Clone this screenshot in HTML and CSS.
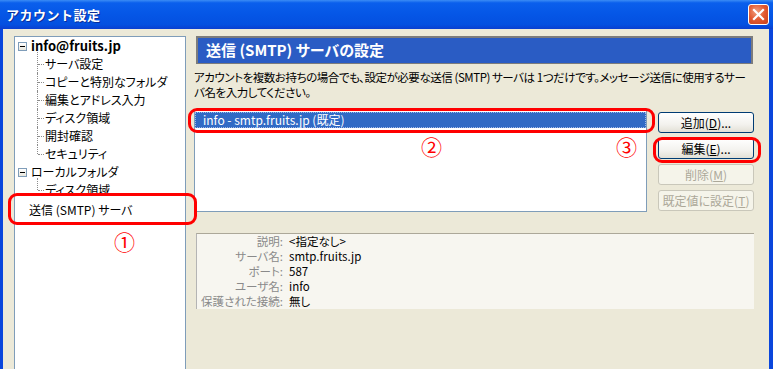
FILE: index.html
```html
<!DOCTYPE html>
<html lang="ja">
<head>
    <meta charset="UTF-8">
    <title>アカウント設定</title>
    <link rel="stylesheet" href="styles.css">
</head>
<body>
    <div class="window">
        <div class="titlebar">
            <span class="title">アカウント設定</span>
            <span class="close">
                <svg width="21" height="21" viewBox="0 0 21 21">
                    <path d="M6 6 L15 15 M15 6 L6 15" stroke="#fff" stroke-width="2.2" stroke-linecap="square"/>
                </svg>
            </span>
        </div>
        <div class="frame">
            <div class="tree">
                <div class="node root">
                    <span class="expander"></span>
                    <b>info@fruits.jp</b>
                </div>
                <div class="group">
                    <div class="child">サーバ設定</div>
                    <div class="child">コピーと特別なフォルダ</div>
                    <div class="child">編集とアドレス入力</div>
                    <div class="child">ディスク領域</div>
                    <div class="child">開封確認</div>
                    <div class="child">セキュリティ</div>
                </div>
                <div class="node root">
                    <span class="expander"></span>
                    ローカルフォルダ
                </div>
                <div class="group">
                    <div class="child">ディスク領域</div>
                </div>
                <div class="node leaf">送信 (SMTP) サーバ</div>
            </div>

            <div class="pane">
                <div class="pane-head">送信 (SMTP) サーバの設定</div>
                <p class="pane-desc">
                    アカウントを複数お持ちの場合でも、設定が必要な送信 (SMTP) サーバは 1つだけです。メッセージ送信に使用するサー<br>バ名を入力してください。
                </p>
                <div class="servers">
                    <div class="server-list">
                        <div class="server-item selected">info - smtp.fruits.jp (既定)</div>
                    </div>
                    <div class="server-buttons">
                        <button class="btn">追加(<u>D</u>)...</button>
                        <button class="btn">編集(<u>E</u>)...</button>
                        <button class="btn" disabled>削除(<u>M</u>)</button>
                        <button class="btn" disabled>既定値に設定(<u>T</u>)</button>
                    </div>
                </div>
                <div class="details">
                    <div class="detail-row"><span class="detail-label">説明:</span><span>&lt;指定なし&gt;</span></div>
                    <div class="detail-row"><span class="detail-label">サーバ名:</span><span>smtp.fruits.jp</span></div>
                    <div class="detail-row"><span class="detail-label">ポート:</span><span>587</span></div>
                    <div class="detail-row"><span class="detail-label">ユーザ名:</span><span>info</span></div>
                    <div class="detail-row"><span class="detail-label">保護された接続:</span><span>無し</span></div>
                </div>
            </div>
        </div>

        <div class="mark mark-tree"></div>
        <div class="mark mark-list"></div>
        <div class="mark mark-edit"></div>
        <span class="num num-1">①</span>
        <span class="num num-2">②</span>
        <span class="num num-3">③</span>
    </div>
</body>
</html>
```

FILE: styles.css
```css
body {
    margin: 0;
    padding: 0;
    font-family: "Noto Sans CJK JP", "Noto Sans", sans-serif;
    font-size: 12px;
    color: #000;
    background: #ece9d8;
}
.window {
    position: relative;
    width: 773px;
    height: 369px;
    display: flex;
    flex-direction: column;
    overflow: hidden;
}
.titlebar {
    height: 29px;
    flex: none;
    display: flex;
    align-items: center;
    justify-content: space-between;
    padding: 0 4px 0 6px;
    background: linear-gradient(to bottom, #3b8cf5 0%, #0a5fec 10%, #0556e6 50%, #0450e0 85%, #0a3fd0 100%);
}
.title {
    color: #fff;
    font-weight: bold;
    font-size: 13px;
    letter-spacing: 0.5px;
    text-shadow: 1px 1px 0 #0a2e9a;
}
.close {
    width: 21px;
    height: 21px;
    margin-top: -1px;
    box-sizing: border-box;
    border: 1px solid #fff;
    border-radius: 3px;
    background: radial-gradient(circle at 40% 35%, #f0a080 0%, #e2582f 50%, #c7401c 100%);
    display: flex;
}
.close svg {
    margin: -1px;
}
.frame {
    flex: 1;
    display: flex;
    border-left: 3px solid #0a46dc;
    border-right: 4px solid #0a46dc;
    padding: 7px 15px 0 11px;
    background: #ece9d8;
    font-feature-settings: "palt";
}
.tree {
    width: 170px;
    flex: none;
    background: #fff;
    border: 1px solid #7f9db9;
    border-bottom: none;
}
.node {
    height: 18px;
    line-height: 18px;
    display: flex;
    align-items: center;
}
.root {
    padding-left: 3px;
}
.root b {
    font-size: 13px;
}
.expander {
    width: 7px;
    height: 7px;
    border: 1px solid #7f9db9;
    margin-right: 4px;
    position: relative;
    background: linear-gradient(#fff, #e8e6dc);
}
.expander::after {
    content: '';
    position: absolute;
    left: 1px;
    top: 3px;
    width: 5px;
    height: 1px;
    background: #000;
}
.child {
    position: relative;
    height: 18px;
    line-height: 18px;
    padding-left: 30px;
}
.child::before {
    content: '';
    position: absolute;
    left: 22px;
    top: 0;
    height: 100%;
    border-left: 1px dotted #8c8c8c;
}
.child:first-child::before {
    top: -3px;
    height: calc(100% + 3px);
}
.child:last-child::before {
    height: 9px;
}
.child:first-child:last-child::before {
    height: 12px;
}
.child::after {
    content: '';
    position: absolute;
    left: 23px;
    top: 9px;
    width: 6px;
    border-top: 1px dotted #8c8c8c;
}
.leaf {
    margin-top: 2px;
    padding-left: 14px;
}
.pane {
    flex: 1;
    margin-left: 8px;
    display: flex;
    flex-direction: column;
}
.pane-head {
    height: 28px;
    margin: 0 1px 0 2px;
    box-sizing: border-box;
    border: 2px solid #7c7c7c;
    border-bottom-width: 1px;
    background: #2a5cc4;
    color: #fff;
    font-weight: bold;
    font-size: 15px;
    line-height: 24px;
    padding-left: 8px;
}
.pane-desc {
    margin: 6px 0 0;
    font-size: 11.5px;
    line-height: 15px;
    letter-spacing: -0.45px;
    white-space: nowrap;
}
.servers {
    display: flex;
    margin-top: 10px;
}
.server-list {
    width: 451px;
    height: 99px;
    background: #fff;
    border: 1px solid #7f9db9;
    padding-top: 1px;
}
.server-item {
    height: 16px;
    line-height: 16px;
    padding-left: 8px;
}
.server-item.selected {
    background: #316ac5;
    color: #fff;
    outline: 1px dotted #9fb8e8;
    outline-offset: -1px;
}
.server-buttons {
    margin-left: 11px;
    width: 96px;
    display: flex;
    flex-direction: column;
    gap: 5px;
    padding-top: 2px;
}
.btn {
    height: 21px;
    padding: 0;
    font-family: inherit;
    font-size: 12px;
    color: #000;
    border: 1px solid #003c74;
    border-radius: 3px;
    background: linear-gradient(#ffffff 0%, #f3f2ee 60%, #e3e0d6 100%);
    font-feature-settings: "palt";
}
.btn:disabled {
    color: #aca899;
    border-color: #c9c7ba;
    background: #f5f4ea;
}
.details {
    margin: 21px 0 0 2px;
    height: 75px;
    border-top: 1px solid #aca899;
    border-left: 1px solid #b4b4b4;
    background: #f7f6f0;
    font-size: 11.5px;
}
.detail-row {
    display: flex;
    line-height: 15px;
    height: 15px;
}
.detail-label {
    width: 86px;
    text-align: right;
    color: #8a8a8a;
    margin-right: 6px;
}
.mark {
    position: absolute;
    border: 3px solid #f00;
    border-radius: 9px;
    box-sizing: border-box;
}
.mark-tree {
    left: 8px;
    top: 193px;
    width: 189px;
    height: 32px;
}
.mark-list {
    left: 188px;
    top: 108px;
    width: 467px;
    height: 25px;
}
.mark-edit {
    left: 653px;
    top: 137px;
    width: 108px;
    height: 26px;
}
.num {
    position: absolute;
    color: #f00;
    font-size: 21px;
    line-height: 21px;
}
.num-1 {
    left: 114px;
    top: 231px;
}
.num-2 {
    left: 421px;
    top: 136px;
}
.num-3 {
    left: 616px;
    top: 136px;
}
```
